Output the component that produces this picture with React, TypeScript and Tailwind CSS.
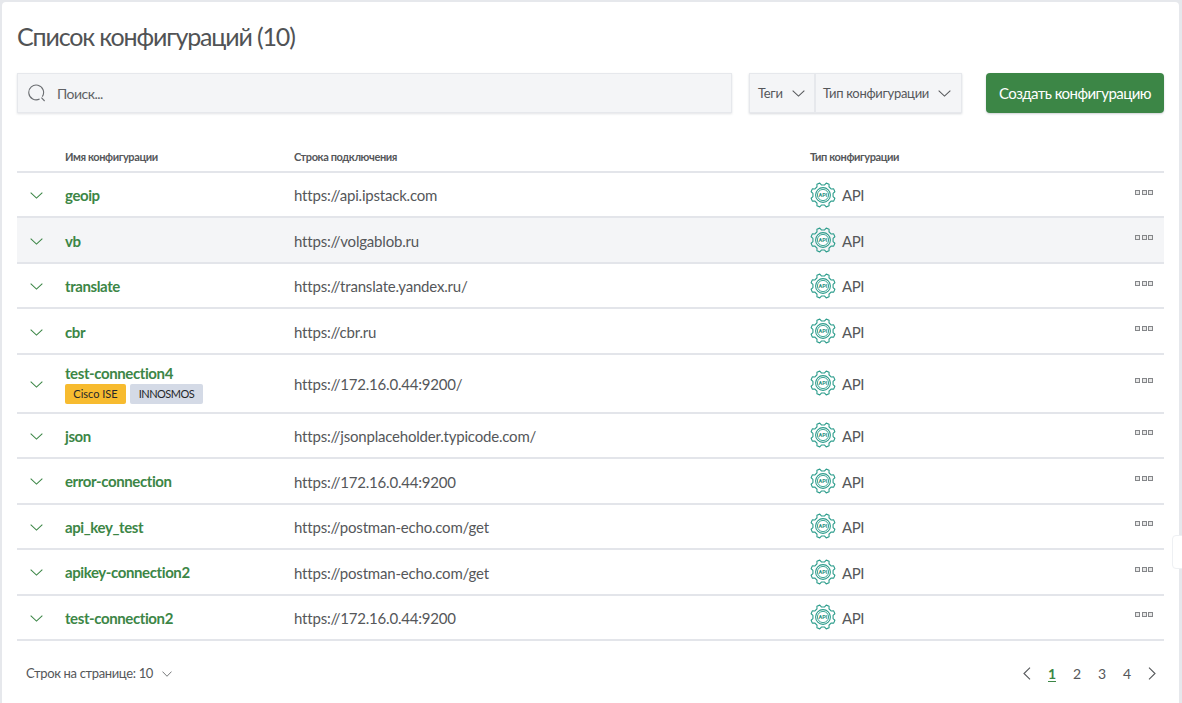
import React from "react";

const rows = [
  { name: "geoip", url: "https://api.ipstack.com" },
  { name: "vb", url: "https://volgablob.ru", hover: true },
  { name: "translate", url: "https://translate.yandex.ru/" },
  { name: "cbr", url: "https://cbr.ru" },
  { name: "test-connection4", url: "https://172.16.0.44:9200/", tags: true },
  { name: "json", url: "https://jsonplaceholder.typicode.com/" },
  { name: "error-connection", url: "https://172.16.0.44:9200" },
  { name: "api_key_test", url: "https://postman-echo.com/get" },
  { name: "apikey-connection2", url: "https://postman-echo.com/get" },
  { name: "test-connection2", url: "https://172.16.0.44:9200" },
];

function Chevron({ className, w = 14, h = 8 }: { className?: string; w?: number; h?: number }) {
  return (
    <svg width={w} height={h} viewBox="0 0 14 8" fill="none" stroke="currentColor" strokeWidth="1.1" className={className} preserveAspectRatio="none">
      <path d="M0.7 0.8 L7 7 L13.3 0.8" />
    </svg>
  );
}

function gearPath() {
  const teeth = 8;
  const pts: string[] = [];
  for (let i = 0; i < teeth; i++) {
    const a = (i / teeth) * Math.PI * 2 + Math.PI / 8;
    const s = (Math.PI * 2) / teeth;
    const seq: [number, number][] = [
      [10.2, -0.48],
      [12.3, -0.26],
      [12.3, 0.26],
      [10.2, 0.48],
    ];
    for (const [r, f] of seq) {
      const t = a + f * s * 0.62;
      pts.push(`${(13 + r * Math.cos(t)).toFixed(2)} ${(13 + r * Math.sin(t)).toFixed(2)}`);
    }
  }
  return "M" + pts.join(" L") + " Z";
}

function ApiIcon() {
  return (
    <svg width="26" height="26" viewBox="0 0 26 26" fill="none" stroke="#2d9d8c" strokeWidth="1.1">
      <path d={gearPath()} strokeLinejoin="round" />
      <circle cx="13" cy="13" r="7.4" />
      <circle cx="13" cy="13" r="5.6" fill="#fff" strokeWidth="0.9" />
      <text x="13" y="15" textAnchor="middle" fontSize="5.6" fontWeight="700" fill="#2a8f80" stroke="none" fontFamily="Roboto, sans-serif">API</text>
    </svg>
  );
}

function Dots() {
  return (
    <div className="mr-[11px] -mt-[5px] flex gap-[1.5px]">
      <span className="h-[5px] w-[5px] border border-[#85878a] bg-[#e8e8e8]" />
      <span className="h-[5px] w-[5px] border border-[#85878a] bg-[#e8e8e8]" />
      <span className="h-[5px] w-[5px] border border-[#85878a] bg-[#e8e8e8]" />
    </div>
  );
}

export default function App() {
  return (
    <div className="relative h-[703px] w-[1182px] overflow-hidden bg-[#e6e8ec] pl-[2px] pt-[2px] pr-[3px] font-['Lato','Roboto',sans-serif] text-[#4f5154]">
      <div className="h-[720px] rounded-[4px] bg-white px-[15px]">
        <h1 className="pb-[2px] pt-[17px] text-[25px] leading-[34px] tracking-[-1.15px] text-[#515355]">Список конфигураций (10)</h1>
        <div className="mt-[18px] flex h-[40px]">
          <div className="flex w-[715px] items-center border border-[#e6e8ec] bg-[#f4f5f7] pl-[10px] shadow-[0_1px_2px_rgba(60,70,90,0.15)]">
            <svg width="18" height="18" viewBox="0 0 18 18" fill="none" stroke="#6b6e72" strokeWidth="1.1">
              <path d="M14.3 12.6 A7.4 7.4 0 1 0 11.6 15" />
              <path d="M13.4 13.6 L16.6 17" />
            </svg>
            <span className="ml-[11px] text-[14px] tracking-[-0.5px] text-[#606265]">Поиск...</span>
          </div>
          <div className="ml-[17px] flex w-[213px] border border-[#e6e8ec] bg-[#f4f5f7] text-[13px] tracking-[-0.3px] text-[#55575a] shadow-[0_1px_2px_rgba(60,70,90,0.2)]">
            <div className="flex w-[66px] items-center justify-between border-r-2 border-[#e6e8ec] pl-[8px] pr-[9px] pt-[1px]">
              <span>Теги</span>
              <Chevron className="text-[#56585b]" w={13} h={7} />
            </div>
            <div className="flex flex-1 items-center justify-between whitespace-nowrap pl-[7px] pr-[10px] pt-[1px]">
              <span>Тип конфигурации</span>
              <Chevron className="text-[#56585b]" w={13} h={7} />
            </div>
          </div>
          <button className="ml-[24px] flex w-[178px] items-center justify-center whitespace-nowrap rounded-[4px] bg-[#3c8646] text-[15px] tracking-[-0.55px] text-white shadow-[0_1px_2px_rgba(60,70,90,0.25)]">
            Создать конфигурацию
          </button>
        </div>
        <div className="mt-[36px] flex h-[24px] items-start border-b-2 border-[#e3e5ea] text-[11px] font-bold tracking-[-0.4px] text-[#55575a]">
          <div className="w-[48px]" />
          <div className="w-[229px] leading-[15px]">Имя конфигурации</div>
          <div className="w-[516px] leading-[15px]">Строка подключения</div>
          <div className="leading-[15px]">Тип конфигурации</div>
        </div>
        {rows.map((r) => (
          <div
            key={r.name}
            className={`flex items-center border-b-2 border-[#e3e5ea] ${r.tags ? "h-[59px]" : "h-[45.45px]"} ${r.hover ? "bg-[#f4f5f7]" : ""}`}
          >
            <div className="flex w-[48px] justify-center pr-[9px] pt-[2px]">
              <Chevron className="text-[#3c8646]" w={13} h={7} />
            </div>
            <div className="w-[229px] pt-[2px]">
              <div className="text-[15px] font-bold leading-[19px] tracking-[-0.4px] text-[#3c8646]">{r.name}</div>
              {r.tags && (
                <div className="mt-[1px] flex gap-[4px] text-[11px] leading-[20px] text-[#25272a]">
                  <span className="w-[61px] rounded-[2px] bg-[#f7bb2f] text-center">Cisco ISE</span>
                  <span className="w-[73px] rounded-[2px] bg-[#d4dae6] text-center tracking-[-0.5px]">INNOSMOS</span>
                </div>
              )}
            </div>
            <div className="w-[516px] pt-[2px] text-[15px] tracking-[-0.2px] text-[#55575a]">{r.url}</div>
            <div className="flex flex-1 items-center">
              <ApiIcon />
              <span className="ml-[6px] pt-[2px] text-[15px] tracking-[-0.5px] text-[#55575a]">API</span>
            </div>
            <Dots />
          </div>
        ))}
        <div className="flex h-[66px] items-center justify-between pl-[9px] pr-[8px] text-[13px] text-[#55575a]">
          <div className="flex items-center gap-[9px] tracking-[-0.35px]">
            <span>Строк на странице: 10</span>
            <Chevron className="text-[#56585b]" w={10} h={6} />
          </div>
          <div className="flex items-center text-[14px]">
            <svg width="8" height="13" viewBox="0 0 8 13" fill="none" stroke="#56585b" strokeWidth="1.1"><path d="M7 0.7 L1 6.5 L7 12.3" /></svg>
            <span className="ml-[17px] w-[8px] border-b border-[#3c8646] text-center font-bold leading-[15px] text-[#3c8646]">1</span>
            <span className="ml-[17px] w-[8px] text-center">2</span>
            <span className="ml-[17px] w-[8px] text-center">3</span>
            <span className="ml-[17px] w-[8px] text-center">4</span>
            <svg className="ml-[17px]" width="8" height="13" viewBox="0 0 8 13" fill="none" stroke="#56585b" strokeWidth="1.1"><path d="M1 0.7 L7 6.5 L1 12.3" /></svg>
          </div>
        </div>
      </div>
      <div className="absolute left-[1172px] top-[535px] h-[34px] w-[12px] rounded-l-[4px] border border-[#eef0f3] bg-white" />
    </div>
  );
}
